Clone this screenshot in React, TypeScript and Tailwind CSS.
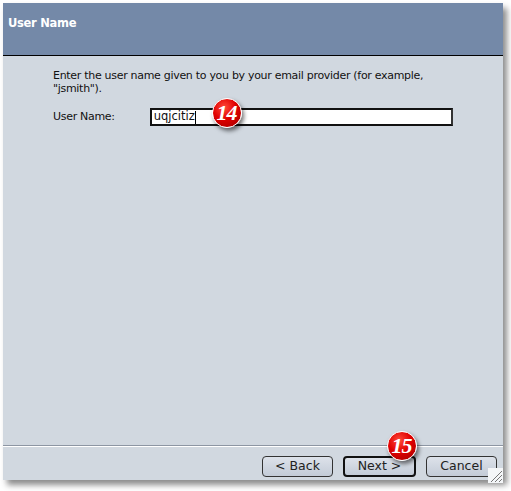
import React from 'react';

const Badge: React.FC<{ n: string; className: string }> = ({ n, className }) => (
  <div
    className={`absolute w-[30px] h-[30px] rounded-full flex items-center justify-center text-white font-bold italic text-[22px] leading-none shadow-[2px_3px_4px_rgba(0,0,0,0.55)] ${className}`}
    style={{
      background: 'radial-gradient(circle at 40% 30%, #ff4a3a 0%, #e00000 45%, #a00000 100%)',
      fontFamily: '"Liberation Serif", serif',
      border: '1.5px solid #fff',
    }}
  >
    <span className="tracking-[-1px] -ml-[1px]">{n}</span>
  </div>
);

const WizButton: React.FC<{ label: string; primary?: boolean; w: string }> = ({ label, primary, w }) => (
  <button
    className={`${w} h-[21px] rounded-[4px] bg-gradient-to-b from-[#dde2ea] to-[#c3cbd7] text-[#222] text-[12.5px] leading-none flex items-center justify-center ${
      primary ? 'border-2 border-[#111]' : 'border border-[#333]'
    }`}
  >
    {label}
  </button>
);

export default function App() {
  return (
    <div className="w-[511px] h-[491px] bg-white relative" style={{ fontFamily: '"DejaVu Sans", sans-serif' }}>
      <div className="absolute left-[3px] top-[3px] w-[500px] h-[477px] bg-[#d1d8e0] flex flex-col shadow-[4px_5px_6px_rgba(0,0,0,0.45)]">
        <div className="h-[53px] bg-[#7489a8] border-b border-black flex items-start px-[5px] pt-[12px]">
          <span className="text-white font-bold text-[11.5px] tracking-[-0.3px]">User Name</span>
        </div>
        <div className="flex-1 px-[50px] pt-[13px] text-[11px] tracking-[-0.3px] text-[#111] relative">
          <p className="leading-[13px] w-[420px]">
            Enter the user name given to you by your email provider (for example, "jsmith").
          </p>
          <div className="flex items-center mt-[13px]">
            <span className="w-[97px]">User Name:</span>
            <div className="w-[304px] h-[18px] bg-white border-2 border-[#111] border-r-[#333] flex items-center px-[2px] text-[11.5px] tracking-normal">
              uqjcitiz<span className="inline-block w-px h-[13px] bg-black" />
            </div>
          </div>
          <Badge n="14" className="left-[209px] top-[42px]" />
        </div>
        <div className="h-[2px] flex flex-col">
          <div className="h-px bg-[#8d96a3]" />
          <div className="h-px bg-white" />
        </div>
        <div className="h-[33px] flex justify-end items-start pt-[9px] pr-[6px] gap-[10px] relative">
          <WizButton label="< Back" w="w-[71px]" />
          <WizButton label="Next >" w="w-[73px]" primary />
          <WizButton label="Cancel" w="w-[71px]" />
          <Badge n="15" className="left-[384px] top-[-16px]" />
          <svg className="absolute right-0 bottom-[-3px]" width="15" height="15" viewBox="0 0 15 15">
            <rect width="15" height="15" fill="#f4f6f8" />
            <path d="M3 14 L14 3 M7 14 L14 7 M11 14 L14 11" stroke="#777" strokeWidth="1" />
          </svg>
        </div>
      </div>
    </div>
  );
}
